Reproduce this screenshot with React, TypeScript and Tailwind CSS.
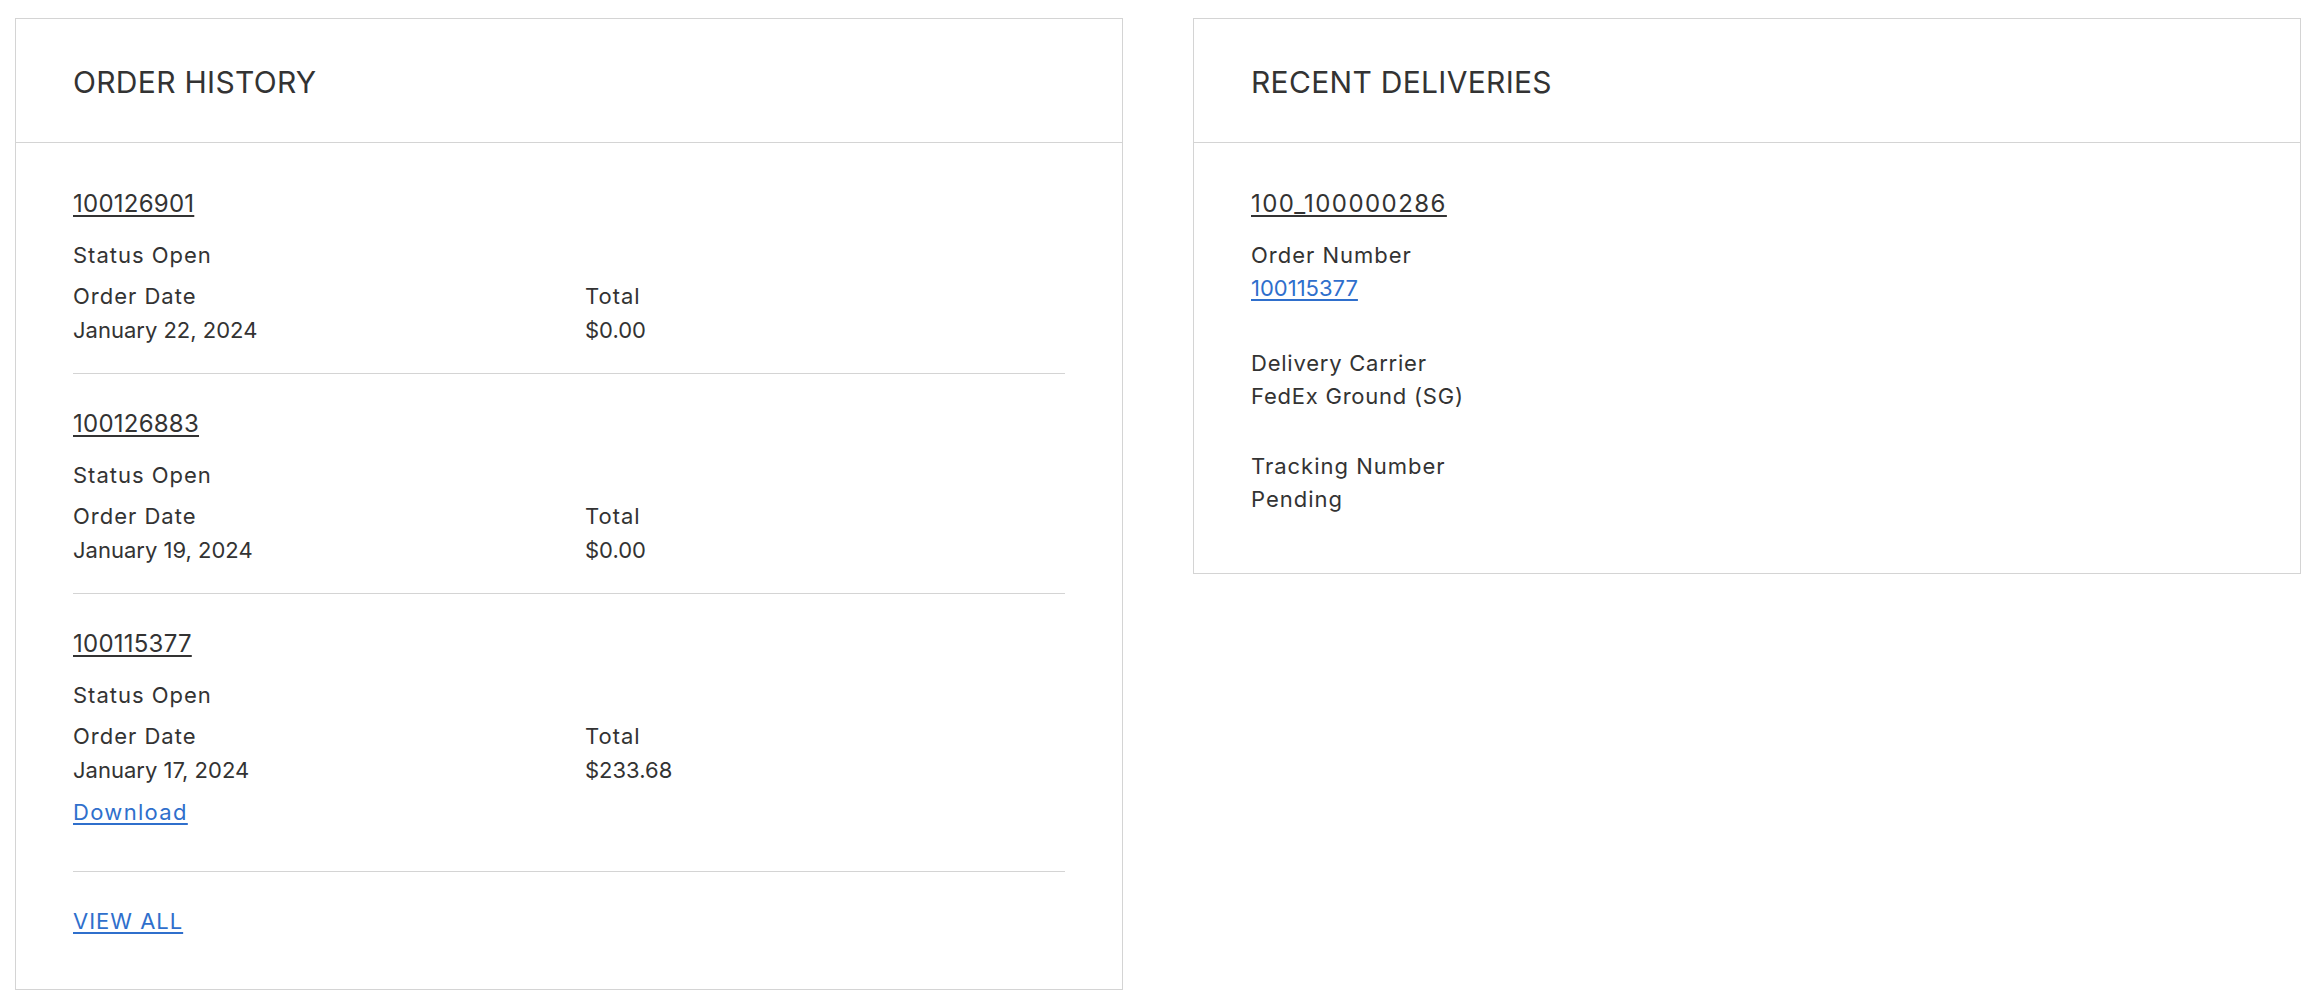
const FONT = "font-['Inter','Liberation_Sans',sans-serif]";
const LABEL = "text-[22px] tracking-[0.045em]";
const LINK = "block w-fit text-[#2f6fcc] underline decoration-[1.5px] underline-offset-[3px]";

type Order = {
  id: string;
  date: string;
  total: string;
  download?: boolean;
};

const ORDERS: Order[] = [
  { id: "100126901", date: "January 22, 2024", total: "$0.00" },
  { id: "100126883", date: "January 19, 2024", total: "$0.00" },
  { id: "100115377", date: "January 17, 2024", total: "$233.68", download: true },
];

function CardHead({ title }: { title: string }) {
  return (
    <div className="flex h-[124px] items-center border-b border-[#d4d4d4] px-[57px] pt-[3px]">
      <h2 className="text-[30px] font-normal leading-none tracking-[0.01em] text-[#333]">
        {title}
      </h2>
    </div>
  );
}

function OrderRow({ order }: { order: Order }) {
  return (
    <div className="border-b border-[#d4d4d4] pt-[32px] pb-[26px] first:pt-[43px]">
      <a className="block w-fit text-[24px] leading-[36px] tracking-[0.01em] text-[#333] underline decoration-[1.5px] underline-offset-[3px]">
        {order.id}
      </a>
      <div className={`mt-[17px] leading-[33px] ${LABEL}`}>Status Open</div>
      <div className="mt-[8px] grid grid-cols-2 gap-x-[32px] text-[22px]">
        <div>
          <div className={`leading-[33px] ${LABEL}`}>Order Date</div>
          <div className="leading-[34px]">{order.date}</div>
        </div>
        <div>
          <div className={`leading-[33px] ${LABEL}`}>Total</div>
          <div className="leading-[34px]">{order.total}</div>
        </div>
      </div>
      {order.download && (
        <a className={`mt-[9px] mb-[16px] leading-[33px] tracking-[0.06em] text-[22px] ${LINK}`}>Download</a>
      )}
    </div>
  );
}

function OrderHistory() {
  return (
    <section className="w-[1108px] border border-[#d4d4d4] bg-white">
      <CardHead title="ORDER HISTORY" />
      <div className="px-[57px] pb-[51px]">
        {ORDERS.map((o) => (
          <OrderRow key={o.id} order={o} />
        ))}
        <a className={`mt-[33px] leading-[33px] ${LABEL} ${LINK}`}>VIEW ALL</a>
      </div>
    </section>
  );
}

function RecentDeliveries() {
  return (
    <section className="w-[1108px] border border-[#d4d4d4] bg-white">
      <CardHead title="RECENT DELIVERIES" />
      <div className="px-[57px] pt-[43px] pb-[57px]">
        <a className="block w-fit text-[24px] leading-[36px] tracking-[0.06em] text-[#333] underline decoration-[1.5px] underline-offset-[3px]">
          100_100000286
        </a>
        <div className="mt-[17px] text-[22px] leading-[33px]">
          <div className={LABEL}>Order Number</div>
          <a className={LINK}>100115377</a>
        </div>
        <div className="mt-[42px] leading-[33px]">
          <div className="text-[22px] tracking-[0.035em]">Delivery Carrier</div>
          <div className="text-[22px] tracking-[0.035em]">FedEx Ground (SG)</div>
        </div>
        <div className="mt-[37px] leading-[33px]">
          <div className={LABEL}>Tracking Number</div>
          <div className={LABEL}>Pending</div>
        </div>
      </div>
    </section>
  );
}

export default function App() {
  return (
    <div className={`${FONT} min-h-screen bg-white pl-[15px] pt-[18px] text-[#333]`}>
      <div className="flex items-start gap-[70px]">
        <OrderHistory />
        <RecentDeliveries />
      </div>
    </div>
  );
}
